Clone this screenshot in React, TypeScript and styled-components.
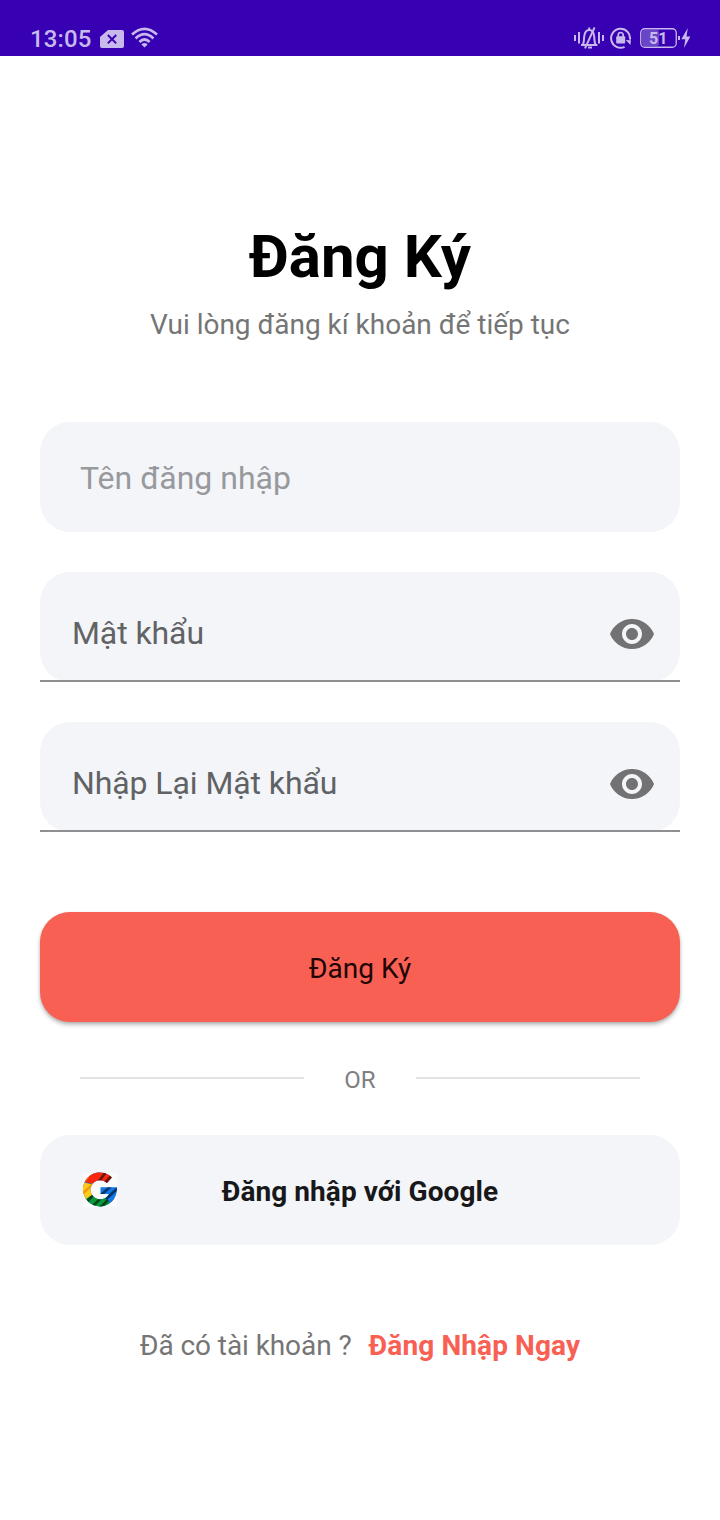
import React from "react";
import styled, { createGlobalStyle } from "styled-components";

const GlobalStyle = createGlobalStyle`
  body {
    margin: 0;
    background: #fff;
    font-family: Roboto, "Noto Sans", sans-serif;
  }
`;

const Screen = styled.div`
  width: 720px;
  height: 1520px;
  overflow: hidden;
  background: #fff;
`;

const StatusBar = styled.header`
  box-sizing: border-box;
  height: 56px;
  padding: 20px 29px 0 30px;
  display: flex;
  justify-content: space-between;
  background: #3700b3;
  color: #c8b9ec;
`;

const StatusGroup = styled.div`
  display: flex;
  align-items: center;
  height: 36px;
`;

const Clock = styled.span`
  width: 70px;
  font-size: 24px;
  font-weight: 500;
  line-height: 36px;
  letter-spacing: 0.15px;
  padding-top: 1px;
`;

const Icon = styled.svg<{ $left?: number; $right?: number }>`
  display: block;
  flex: none;
  margin-left: ${(p) => p.$left ?? 0}px;
  margin-right: ${(p) => p.$right ?? 0}px;
`;

const Content = styled.main`
  padding: 166px 40px 0;
  display: flex;
  flex-direction: column;
`;

const Title = styled.h1`
  margin: 0;
  font-size: 60px;
  font-weight: 700;
  line-height: 70px;
  text-align: center;
  color: #000;
`;

const Subtitle = styled.p`
  margin: 16px 0 81px;
  font-size: 28px;
  line-height: 33px;
  letter-spacing: -0.01px;
  text-align: center;
  color: #757575;
`;

const Fields = styled.div`
  display: flex;
  flex-direction: column;
  gap: 40px;
`;

const NameField = styled.div`
  box-sizing: border-box;
  height: 110px;
  padding: 0 40px;
  border-radius: 30px;
  background: #f3f5f9;
  font-size: 32px;
  line-height: 112px;
  color: #98999c;
`;

const PasswordField = styled.div`
  height: 108px;
  border-bottom: 2px solid #8f8f91;
`;

const PasswordBox = styled.div`
  box-sizing: border-box;
  height: 110px;
  padding: 14px 24px 0 32px;
  display: flex;
  align-items: center;
  justify-content: space-between;
  border-radius: 30px;
  background: #f3f5f9;
  clip-path: inset(0 0 2px 0);
`;

const Label = styled.span`
  margin-top: -2px;
  font-size: 32px;
  line-height: 38px;
  letter-spacing: -0.08px;
  color: #616264;
`;

const SubmitButton = styled.button`
  margin: 80px 0 0;
  padding: 2px 0 0;
  height: 110px;
  border: 0;
  border-radius: 30px;
  background: #f86054;
  box-shadow: 0 3px 4px rgba(0, 0, 0, 0.24), 0 1px 3px rgba(0, 0, 0, 0.12);
  font: 400 28px/33px Roboto, "Noto Sans", sans-serif;
  color: #210504;
`;

const Divider = styled.div`
  height: 32px;
  margin: 40px 40px 41px;
  display: flex;
  align-items: center;
`;

const Rule = styled.span`
  flex: 1;
  height: 2px;
  background: #e2e2e2;
`;

const DividerText = styled.span`
  width: 112px;
  padding-top: 4px;
  font-size: 24px;
  line-height: 28px;
  text-align: center;
  color: #808080;
`;

const GoogleButton = styled.div`
  box-sizing: border-box;
  height: 110px;
  padding: 0 40px;
  display: grid;
  grid-template-columns: 40px 1fr 40px;
  align-items: center;
  border-radius: 30px;
  background: #f3f5f9;
`;

const GoogleText = styled.span`
  padding-top: 2px;
  font-size: 28px;
  font-weight: 700;
  line-height: 33px;
  letter-spacing: 0.06px;
  text-align: center;
  color: #18181a;
`;

const Footer = styled.p`
  margin: 84px 0 0;
  display: flex;
  justify-content: center;
  gap: 17px;
  font-size: 28px;
  line-height: 33px;
  color: #757575;
`;

const Question = styled.span`
  letter-spacing: -0.08px;
`;

const LoginLink = styled.span`
  font-weight: 700;
  letter-spacing: 0.12px;
  color: #f86054;
`;

const NoSimIcon = () => (
  <Icon width="24" height="36" viewBox="0 0 24 36">
    <path fill="currentColor" d="M8 10h14a2 2 0 0 1 2 2v14a2 2 0 0 1-2 2H2a2 2 0 0 1-2-2V17z" />
    <path stroke="#3700b3" strokeWidth="2" d="M7.8 15l8.4 8.4M16.2 15l-8.4 8.4" />
  </Icon>
);

const WifiIcon = () => (
  <Icon width="28" height="36" viewBox="0 0 28 36" $left={7}>
    <g fill="none" stroke="currentColor" strokeWidth="2.7">
      <path d="M1 14.6Q13.5 3.2 26 14.6" />
      <path d="M4.6 18.4Q13.5 10 22.4 18.4" />
      <path d="M8.4 22Q13.5 17 18.6 22" />
    </g>
    <path fill="currentColor" d="M10.4 24.4Q13.5 21.8 16.6 24.4L13.5 27.6z" />
  </Icon>
);

const SilentIcon = () => (
  <Icon width="30" height="36" viewBox="0 0 30 36" $right={6}>
    <g fill="none" stroke="currentColor" strokeWidth="2">
      <path d="M1 15v6M5 12v11.5M25 12v11.5M29 15v6" />
      <path d="M7 25h16.4" />
      <path d="M8.8 25c1.4-2.4 1-5 1.4-8.4C10.6 12.4 12.4 10 15.2 10s4.6 2.4 5 6.6c.4 3.4 0 6 1.4 8.4" />
      <path d="M15.2 7.4v3M14 27.4h4" />
      <path d="M11 28.4L20.6 7.4" />
    </g>
  </Icon>
);

const RotationLockIcon = () => (
  <Icon width="22" height="36" viewBox="0 0 22 36" $right={8}>
    <path
      fill="none"
      stroke="currentColor"
      strokeWidth="2"
      d="M14.6 26.9A9.5 9.5 0 1 1 20 19.6"
    />
    <path fill="currentColor" d="M15.8 20l5.2.2-.6 4.8z" />
    <rect x="6.2" y="16.2" width="9" height="7.4" rx="1" fill="currentColor" />
    <path fill="none" stroke="currentColor" strokeWidth="1.7" d="M8.2 17v-2a2.5 2.5 0 0 1 5 0V17" />
  </Icon>
);

const BatteryIcon = () => (
  <Icon width="51" height="36" viewBox="0 0 51 36">
    <rect x="2" y="10" width="17" height="16" rx="2" fill="#6b45c7" />
    <rect x="0.75" y="8.75" width="35.5" height="18.5" rx="4" fill="none" stroke="currentColor" strokeWidth="1.3" />
    <rect x="38" y="16" width="2" height="4" fill="currentColor" />
    <path fill="currentColor" d="M47.8 8L41.3 19.2h4L44 28l6.4-11.4h-3.9z" />
    <text x="18.2" y="23.8" textAnchor="middle" fontFamily="Roboto, sans-serif" fontSize="16" fontWeight="700" fill="currentColor">
      51
    </text>
  </Icon>
);

const EyeIcon = () => (
  <Icon width="48" height="48" viewBox="0 0 24 24">
    <path
      fill="#727274"
      d="M12 4.5C7 4.5 2.73 7.61 1 12c1.73 4.39 6 7.5 11 7.5s9.27-3.11 11-7.5c-1.73-4.39-6-7.5-11-7.5zM12 17c-2.76 0-5-2.24-5-5s2.24-5 5-5 5 2.24 5 5-2.24 5-5 5zm0-8c-1.66 0-3 1.34-3 3s1.34 3 3 3 3-1.34 3-3-1.34-3-3-3z"
    />
  </Icon>
);

const GoogleIcon = () => (
  <Icon width="40" height="40" viewBox="0 0 40 40">
    <defs>
      <pattern id="checker" width="2" height="2" patternUnits="userSpaceOnUse">
        <rect width="2" height="2" fill="#fefefe" />
        <rect width="1" height="1" fill="#f6f7f9" />
        <rect x="1" y="1" width="1" height="1" fill="#f6f7f9" />
      </pattern>
      <clipPath id="letter">
        <path d="M32 7.4A17 17 0 1 0 36.8 17.2H20.5v6.8h8.3A9.6 9.6 0 1 1 27 13z" />
      </clipPath>
    </defs>
    <rect x="3" y="3" width="34" height="34" fill="url(#checker)" />
    <g clipPath="url(#letter)">
      <rect width="40" height="40" fill="#0f78e6" />
      <path d="M0 0h40v16H20L5 12z" fill="#f9270c" />
      <path d="M0 29l10-5 10-1 9.500 9V40H0z" fill="#0a9a3c" />
      <g stroke="#000" strokeOpacity="0.55" strokeWidth="2.800">
        <path d="M17 14L26 2M24 14L33 4" />
        <path d="M21 25L31 16M26 29L38 18M31 34L40 25" />
        <path d="M5 34L14 24M11 38L21 28M18 40L28 30" />
      </g>
      <path d="M0 11.500l12.500 3v10L5 29.500 0 31z" fill="#ffcb14" />
      <path d="M1 25L13 14" stroke="#ee9a10" strokeWidth="2.400" />
      <path d="M2 15L9 6" stroke="#ff7a10" strokeWidth="1.500" />
    </g>
  </Icon>
);

export default function App() {
  return (
    <Screen>
      <GlobalStyle />
      <StatusBar>
        <StatusGroup>
          <Clock>13:05</Clock>
          <NoSimIcon />
          <WifiIcon />
        </StatusGroup>
        <StatusGroup>
          <SilentIcon />
          <RotationLockIcon />
          <BatteryIcon />
        </StatusGroup>
      </StatusBar>
      <Content>
        <Title>Đăng Ký</Title>
        <Subtitle>Vui lòng đăng kí khoản để tiếp tục</Subtitle>
        <Fields>
          <NameField>Tên đăng nhập</NameField>
          {["Mật khẩu", "Nhập Lại Mật khẩu"].map((label) => (
            <PasswordField key={label}>
              <PasswordBox>
                <Label>{label}</Label>
                <EyeIcon />
              </PasswordBox>
            </PasswordField>
          ))}
        </Fields>
        <SubmitButton>Đăng Ký</SubmitButton>
        <Divider>
          <Rule />
          <DividerText>OR</DividerText>
          <Rule />
        </Divider>
        <GoogleButton>
          <GoogleIcon />
          <GoogleText>Đăng nhập với Google</GoogleText>
        </GoogleButton>
        <Footer>
          <Question>Đã có tài khoản ?</Question>
          <LoginLink>Đăng Nhập Ngay</LoginLink>
        </Footer>
      </Content>
    </Screen>
  );
}
